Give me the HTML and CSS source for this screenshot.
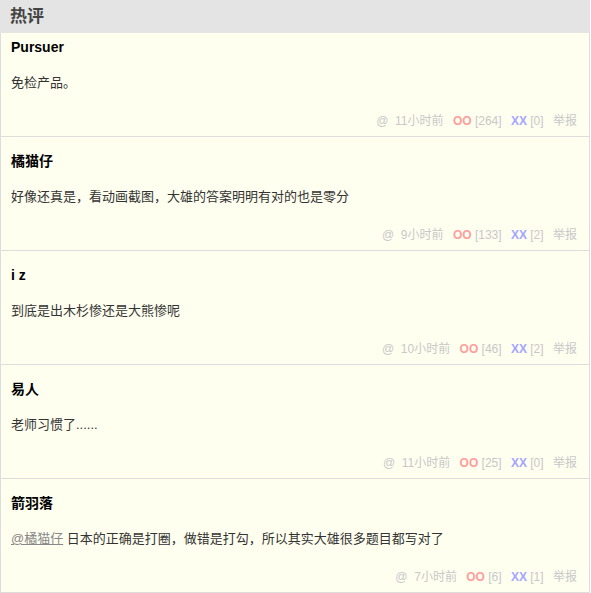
FILE: index.html
```html
<!DOCTYPE html>
<html lang="zh-CN">
<head>
  <meta charset="UTF-8" />
  <title>热评</title>
  <link rel="stylesheet" href="styles.css">
</head>
<body>

  <div class="hot">
    <h3 class="hot-title">热评</h3>
    <ol class="comments">
      <li class="comment first">
        <div class="author">Pursuer</div>
        <div class="text">免检产品。</div>
        <div class="meta">
          <span class="time">@&nbsp; 11小时前</span>
          <span class="vote"><b class="oo">OO</b> [264]</span>
          <span class="vote"><b class="xx">XX</b> [0]</span>
          <span class="report">举报</span>
        </div>
      </li>
      <li class="comment">
        <div class="author">橘猫仔</div>
        <div class="text">好像还真是，看动画截图，大雄的答案明明有对的也是零分</div>
        <div class="meta">
          <span class="time">@&nbsp; 9小时前</span>
          <span class="vote"><b class="oo">OO</b> [133]</span>
          <span class="vote"><b class="xx">XX</b> [2]</span>
          <span class="report">举报</span>
        </div>
      </li>
      <li class="comment">
        <div class="author">i z</div>
        <div class="text">到底是出木杉惨还是大熊惨呢</div>
        <div class="meta">
          <span class="time">@&nbsp; 10小时前</span>
          <span class="vote"><b class="oo">OO</b> [46]</span>
          <span class="vote"><b class="xx">XX</b> [2]</span>
          <span class="report">举报</span>
        </div>
      </li>
      <li class="comment">
        <div class="author">易人</div>
        <div class="text">老师习惯了......</div>
        <div class="meta">
          <span class="time">@&nbsp; 11小时前</span>
          <span class="vote"><b class="oo">OO</b> [25]</span>
          <span class="vote"><b class="xx">XX</b> [0]</span>
          <span class="report">举报</span>
        </div>
      </li>
      <li class="comment">
        <div class="author">箭羽落</div>
        <div class="text"><a href="#" class="mention">@橘猫仔</a> 日本的正确是打圈，做错是打勾，所以其实大雄很多题目都写对了</div>
        <div class="meta">
          <span class="time">@&nbsp; 7小时前</span>
          <span class="vote"><b class="oo">OO</b> [6]</span>
          <span class="vote"><b class="xx">XX</b> [1]</span>
          <span class="report">举报</span>
        </div>
      </li>
    </ol>
  </div>

</body>
</html>
```

FILE: styles.css
```css
body {
  margin: 0;
  padding: 0;
  font-family: "Liberation Sans", Arial, "Noto Sans CJK SC", sans-serif;
  font-size: 13px;
  color: #333;
  background: #fff;
}
.hot {
  width: 590px;
}
.hot-title {
  margin: 0;
  height: 33px;
  line-height: 33px;
  padding: 0 10px;
  background: #e4e4e4;
  color: #444;
  font-size: 17px;
  font-weight: bold;
}
.comments {
  list-style: none;
  margin: 0;
  padding: 0;
}
.comment {
  background: #fffff0;
  border-left: 1px solid #ddd;
  border-right: 1px solid #ddd;
  border-bottom: 1px solid #ddd;
  padding: 14px 12px 5px 10px;
}
.comment.first {
  padding-top: 4px;
}
.author {
  line-height: 20px;
  font-size: 14px;
  font-weight: bold;
  color: #000;
}
.text {
  margin-top: 16px;
  line-height: 20px;
}
.mention {
  color: #888;
  text-decoration: underline;
}
.meta {
  margin-top: 18px;
  line-height: 20px;
  font-size: 12px;
  color: #c8c8c8;
  text-align: right;
}
.meta span {
  margin-left: 6px;
}
.meta b {
  font-weight: bold;
}
.oo {
  color: #ff9d9d;
}
.xx {
  color: #a5a5ff;
}
```
